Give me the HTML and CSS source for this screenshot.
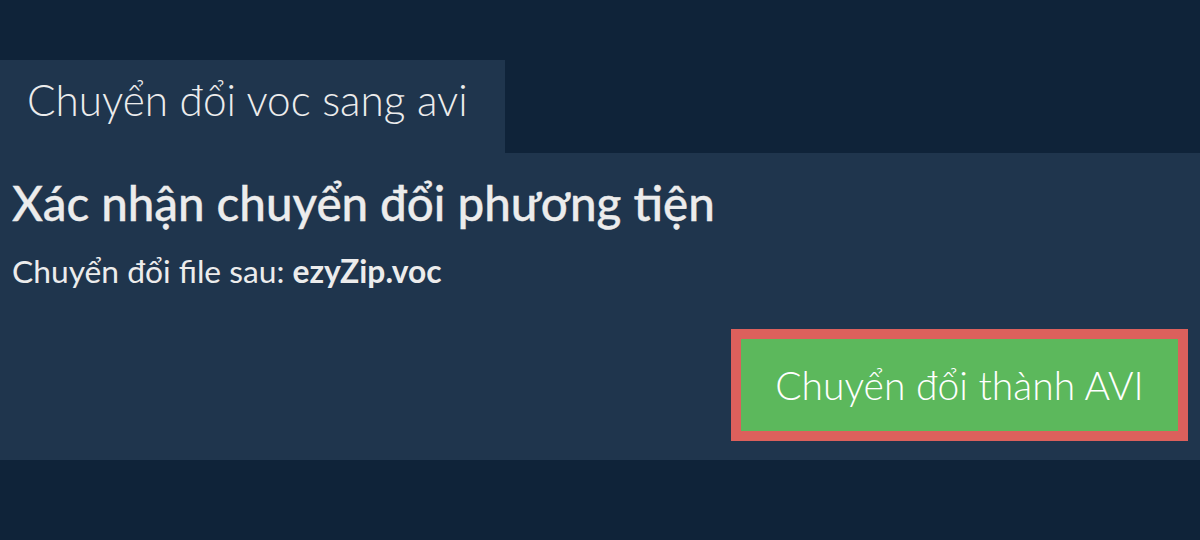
FILE: index.html
```html
<!DOCTYPE html>
<html lang="vi">
<head>
<meta charset="utf-8">
<title>Chuyển đổi voc sang avi</title>
<link rel="stylesheet" href="styles.css">
</head>
<body>
<div class="page">
  <div class="tab">Chuyển đổi voc sang avi</div>
  <div class="panel">
    <h1 class="title">Xác nhận chuyển đổi phương tiện</h1>
    <p class="file">Chuyển đổi file sau: <strong>ezyZip.voc</strong></p>
    <div class="actions">
      <button class="convert">Chuyển đổi thành AVI</button>
    </div>
  </div>
</div>
</body>
</html>
```
FILE: styles.css
```css
html, body {
  margin: 0;
  padding: 0;
  background: #0f2339;
  font-family: Lato, "Open Sans", sans-serif;
  color: #ececec;
}
.page {
  padding-top: 60px;
}
.tab {
  display: inline-block;
  width: 505px;
  box-sizing: border-box;
  height: 93px;
  padding: 15px 0 0 27px;
  background: #1f354d;
  font-size: 42.3px;
  font-weight: 300;
  line-height: 50px;
  vertical-align: top;
}
.panel {
  background: #1f354d;
  height: 307px;
  box-sizing: border-box;
  padding: 22px 12px 0 12px;
  display: flex;
  flex-direction: column;
}
.title {
  margin: 0;
  font-size: 47.5px;
  font-weight: 500;
  line-height: 56px;
  -webkit-text-stroke: 0.35px #ececec;
}
.file {
  margin: 21px 0 0 0;
  font-size: 31.75px;
  font-weight: 400;
  line-height: 38px;
}
.file strong {
  font-weight: 700;
}
.actions {
  display: flex;
  justify-content: flex-end;
  margin-top: 39px;
}
.convert {
  width: 457px;
  height: 112px;
  box-sizing: border-box;
  border: 10px solid #dc605c;
  background: #5cb85c;
  color: #ffffff;
  font-family: Lato, "Open Sans", sans-serif;
  font-size: 39px;
  font-weight: 300;
  padding: 0;
}
```
